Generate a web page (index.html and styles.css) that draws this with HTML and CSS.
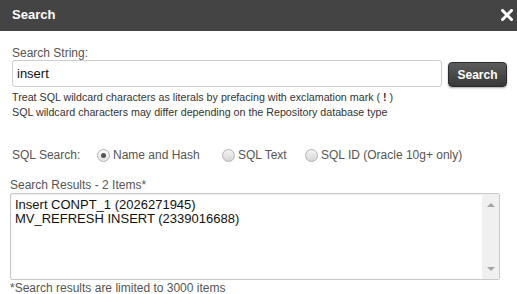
FILE: index.html
```html
<!DOCTYPE html>
<html>
<head>
  <meta charset="UTF-8">
  <title>Search</title>
  <link rel="stylesheet" href="styles.css">
</head>
<body>
  <div class="dialog">
    <div class="titlebar">
      <span class="title">Search</span>
      <svg class="close" width="12" height="12" viewBox="0 0 12 12">
        <path d="M1.5 1.5 L10.5 10.5 M10.5 1.5 L1.5 10.5" stroke="#fff" stroke-width="3" stroke-linecap="square"/>
      </svg>
    </div>

    <div class="form-top">
      <div class="field-label">Search String:</div>
      <div class="search-row">
        <input class="search-input" type="text" value="insert">
        <button class="search-btn">Search</button>
      </div>
      <p class="hint">Treat SQL wildcard characters as literals by prefacing with exclamation mark ( <b>!</b> )<br>SQL wildcard characters may differ depending on the Repository database type</p>

      <div class="sql-row">
        <span class="sql-label">SQL Search:</span>
        <span class="option opt-name"><span class="radio checked"></span>Name and Hash</span>
        <span class="option opt-text"><span class="radio"></span>SQL Text</span>
        <span class="option"><span class="radio"></span>SQL ID (Oracle 10g+ only)</span>
      </div>
    </div>

    <div class="results-block">
      <div class="field-label">Search Results - 2 Items*</div>
      <div class="results">
        <div class="results-list">
          <div class="item">Insert CONPT_1 (2026271945)</div>
          <div class="item">MV_REFRESH INSERT (2339016688)</div>
        </div>
        <div class="scrollbar">
          <span class="arrow up"></span>
          <span class="arrow down"></span>
        </div>
      </div>
      <div class="note">*Search results are limited to 3000 items</div>
    </div>
  </div>
</body>
</html>
```

FILE: styles.css
```css
body {
  margin: 0;
  background-color: white;
  font-family: "Liberation Sans", Arial, sans-serif;
  color: #555;
}

.titlebar {
  height: 31px;
  background-color: #444;
  display: flex;
  align-items: center;
  justify-content: space-between;
  padding: 0 4px 0 12px;
}

.title {
  color: white;
  font-size: 13px;
  font-weight: bold;
  margin-top: -2px;
}

.close {
  display: block;
  margin-top: -1px;
}

.form-top {
  padding: 15px 10px 0 12px;
}

.field-label {
  font-size: 12px;
  line-height: 14px;
  color: #555;
}

.search-row {
  display: flex;
  align-items: flex-end;
  gap: 6px;
}

.search-input {
  width: 430px;
  height: 27px;
  box-sizing: border-box;
  margin: 0;
  padding: 0 4px;
  border: 1px solid #ccc;
  border-radius: 3px;
  font-family: "Liberation Sans", Arial, sans-serif;
  font-size: 13px;
  color: #111;
  outline: none;
}

.search-btn {
  width: 59px;
  height: 25px;
  box-sizing: border-box;
  padding: 0;
  border: 1px solid #2b2b2b;
  border-radius: 4px;
  background: linear-gradient(#5c5c5c, #383838);
  box-shadow: 0 1px 2px rgba(0, 0, 0, 0.35);
  color: white;
  font-family: "Liberation Sans", Arial, sans-serif;
  font-size: 12px;
  font-weight: bold;
}

.hint {
  margin: 3px 0 0;
  font-size: 10.7px;
  line-height: 15px;
  color: #333;
}

.sql-row {
  display: flex;
  align-items: center;
  height: 16px;
  margin-top: 27px;
  font-size: 12px;
  color: #555;
}

.sql-label {
  width: 85px;
}

.option {
  display: flex;
  align-items: center;
  gap: 3px;
}

.opt-name {
  width: 125px;
}

.opt-text {
  width: 83px;
}

.radio {
  width: 13px;
  height: 13px;
  box-sizing: border-box;
  border: 1px solid #b3b3b3;
  border-radius: 50%;
  background: linear-gradient(#f4f4f4, #d6d6d6);
  display: flex;
  align-items: center;
  justify-content: center;
}

.radio.checked {
  background: linear-gradient(#fafafa, #e4e4e4);
}

.radio.checked::after {
  content: "";
  width: 5px;
  height: 5px;
  border-radius: 50%;
  background-color: #555;
}

.results-block {
  padding: 15px 17px 0 10px;
}

.results {
  display: flex;
  height: 87px;
  box-sizing: border-box;
  margin-top: 1px;
  border: 1px solid #c8c8c8;
  border-radius: 2px;
  box-shadow: inset 0 1px 2px rgba(0, 0, 0, 0.08);
}

.results-list {
  flex: 1;
  padding: 4px 4px;
  font-size: 13px;
  line-height: 14px;
  color: #111;
}

.scrollbar {
  width: 17px;
  background-color: #f0f0f0;
  display: flex;
  flex-direction: column;
  justify-content: space-between;
  align-items: center;
  padding: 9px 0 8px;
}

.arrow {
  width: 0;
  height: 0;
  border-left: 4px solid transparent;
  border-right: 4px solid transparent;
}

.arrow.up {
  border-bottom: 4px solid #a5a5a5;
}

.arrow.down {
  border-top: 4px solid #a5a5a5;
}

.note {
  margin-top: 1px;
  font-size: 12px;
  line-height: 14px;
  color: #555;
}
```
